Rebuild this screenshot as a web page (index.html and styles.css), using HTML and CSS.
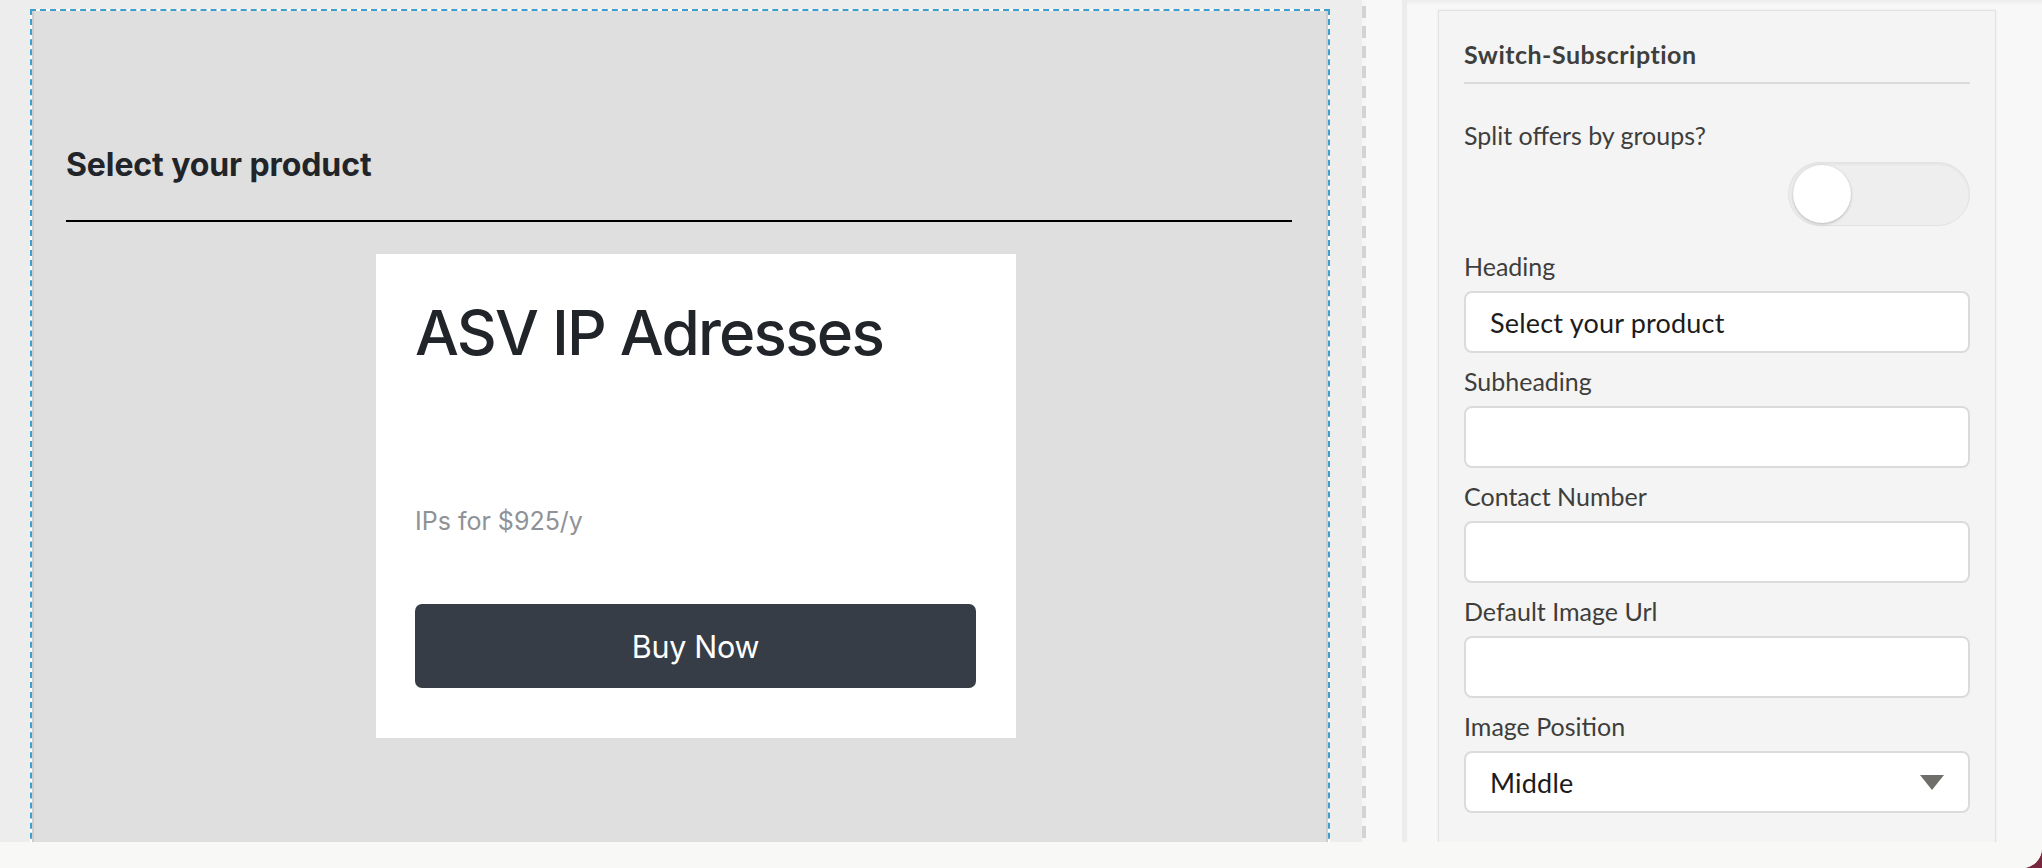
FILE: index.html
```html
<!DOCTYPE html>
<html lang="en">
<head>
<meta charset="utf-8">
<title>Switch-Subscription</title>
<link rel="stylesheet" href="styles.css">
</head>
<body>
<div class="app">
  <div class="workspace">
    <div class="stage">
      <div class="canvas">
        <div class="canvas-inner">
          <h2 class="section-title">Select your product</h2>
          <div class="rule"></div>
          <div class="offers">
            <div class="offer-card">
              <h1 class="offer-name">ASV IP Adresses</h1>
              <p class="offer-price">IPs for $925/y</p>
              <button class="buy-btn" type="button">Buy Now</button>
            </div>
          </div>
        </div>
      </div>
    </div>
    <div class="splitter"></div>
    <div class="props">
      <div class="props-inner">
        <div class="panel">
          <div class="panel-title">Switch-Subscription</div>
          <div class="toggle-field">
            <div class="label">Split offers by groups?</div>
            <div class="toggle-row">
              <span class="toggle"><span class="knob"></span></span>
            </div>
          </div>
          <div class="field">
            <div class="label">Heading</div>
            <div class="input">Select your product</div>
          </div>
          <div class="field">
            <div class="label">Subheading</div>
            <div class="input"></div>
          </div>
          <div class="field">
            <div class="label">Contact Number</div>
            <div class="input"></div>
          </div>
          <div class="field">
            <div class="label">Default Image Url</div>
            <div class="input"></div>
          </div>
          <div class="field">
            <div class="label">Image Position</div>
            <div class="input select">
              <span>Middle</span>
              <svg class="caret" width="24" height="15" viewBox="0 0 24 15"><polygon points="0,0 24,0 12,15" fill="#706e6b"/></svg>
            </div>
          </div>
        </div>
      </div>
    </div>
  </div>
  <div class="statusbar"></div>
</div>
</body>
</html>
```

FILE: styles.css
```css
* { box-sizing: border-box; }

html, body {
  margin: 0;
  padding: 0;
  height: 100%;
}

body {
  background: #7a2840;
  overflow: hidden;
}

.app {
  width: 2042px;
  height: 868px;
  background: #f8f8f6;
  border-bottom-right-radius: 20px;
  overflow: hidden;
  display: flex;
  flex-direction: column;
}

.workspace {
  height: 842px;
  display: flex;
  overflow: hidden;
}

.statusbar {
  height: 26px;
  background: #f8f8f6;
}

/* ---------- stage / canvas ---------- */
.stage {
  width: 1362px;
  flex: none;
  background: #ededed;
  padding: 9px 0 0 30px;
  overflow: hidden;
}

.canvas {
  width: 1300px;
  height: 900px;
  background: #ffffff;
  border: 2px dashed #3c9fd0;
  border-bottom: none;
}

.canvas-inner {
  height: 100%;
  background: #dfdfdf;
  border-left: 2px solid #cfcfcf;
  border-right: 2px solid #cfcfcf;
  padding: 135px 32px 0 32px;
  font-family: Inter, "Liberation Sans", sans-serif;
}

.section-title {
  margin: 0;
  font-size: 32px;
  line-height: 38px;
  font-weight: 700;
  color: #212529;
  letter-spacing: -0.1px;
}

.rule {
  margin-top: 36px;
  height: 2px;
  background: #000;
  margin-right: 2px;
}

.offers {
  padding-top: 32px;
  display: flex;
}

.offer-card {
  margin-left: 310px;
  width: 640px;
  height: 484px;
  background: #fff;
  padding: 41px 40px 50px 39px;
  display: flex;
  flex-direction: column;
}

.offer-name {
  margin: 0;
  font-size: 62px;
  line-height: 75px;
  font-weight: 500;
  color: #212529;
  letter-spacing: -1.8px;
}

.offer-price {
  margin: 132px 0 0 0;
  font-size: 25px;
  line-height: 39px;
  color: #8f9296;
}

.buy-btn {
  margin-top: 63px;
  height: 84px;
  width: 100%;
  border: none;
  border-radius: 7px;
  background: #363d47;
  color: #fff;
  font-family: Inter, "Liberation Sans", sans-serif;
  font-size: 30.5px;
  letter-spacing: -0.3px;
  padding: 0;
}

/* ---------- splitter ---------- */
.splitter {
  width: 4px;
  flex: none;
  background: repeating-linear-gradient(to bottom, #f6f6f6 0 6px, #d3d3d3 6px 18px, #f6f6f6 18px 20px);
}

/* ---------- property pane ---------- */
.props {
  flex: 1;
  background: #f8f8f8;
  padding-left: 36px;
}

.props-inner {
  height: 100%;
  border-left: 5px solid #ececec;
  padding: 10px 0 0 31px;
  box-shadow: inset 0 5px 5px -3px rgba(0, 0, 0, 0.06);
}

.panel {
  width: 558px;
  height: 900px;
  background: #f4f4f4;
  border: 1px solid #e2e2e2;
  box-shadow: 0 0 3px rgba(0, 0, 0, 0.06);
  padding: 28px 25px 0 25px;
  font-family: Lato, "Open Sans", sans-serif;
  color: #3e3e3c;
}

.panel-title {
  font-size: 25px;
  line-height: 30px;
  font-weight: 700;
  letter-spacing: 0.5px;
  padding-bottom: 13px;
  border-bottom: 2px solid #dddbda;
}

.label {
  font-size: 25px;
  line-height: 30px;
  color: #3e3e3c;
}

.toggle-field {
  padding-top: 36px;
}

.toggle-row {
  display: flex;
  justify-content: flex-end;
  padding-top: 12px;
}

.toggle {
  width: 182px;
  height: 64px;
  border-radius: 32px;
  background: #eeeeee;
  border: 1px solid #e2e2e2;
  box-shadow: inset 0 2px 2px rgba(0, 0, 0, 0.04);
  display: flex;
  align-items: center;
  padding-left: 4px;
}

.knob {
  width: 58px;
  height: 58px;
  border-radius: 50%;
  background: #fff;
  box-shadow: 0 1px 3px rgba(0, 0, 0, 0.25);
}

.field {
  padding-bottom: 13px;
}

.toggle-field + .field {
  padding-top: 25px;
}

.field .label {
  margin-bottom: 10px;
}

.input {
  height: 62px;
  background: #fff;
  border: 2px solid #dddbda;
  border-radius: 8px;
  padding: 0 24px;
  display: flex;
  align-items: center;
  font-size: 27px;
  letter-spacing: 0.2px;
  color: #1d1c1b;
}

.select {
  justify-content: space-between;
}

.caret {
  display: block;
}
```
